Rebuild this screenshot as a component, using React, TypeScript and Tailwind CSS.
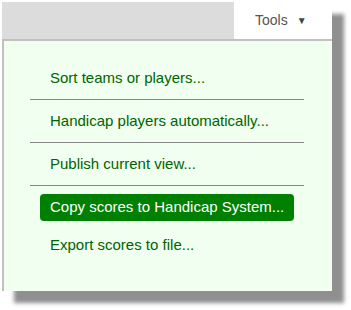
import React from 'react';

const App = () => {
  const items = [
    'Sort teams or players...',
    'Handicap players automatically...',
    'Publish current view...',
    'Copy scores to Handicap System...',
    'Export scores to file...',
  ];
  const active = 3;

  return (
    <div className="w-[351px] h-[310px] bg-white p-[2px]" style={{ fontFamily: '"Liberation Sans", Arial, sans-serif' }}>
      <div className="w-[330px] shadow-[12px_12px_4px_#8f8f8f]">
        {/* Top bar with Tools tab */}
        <div className="flex h-[37px]">
          <div className="flex-1 bg-[#dcdcdc]" />
          <div className="w-[98px] bg-white flex items-center pl-[21px] text-[14px] text-[#555]">
            <span>Tools</span>
            <span className="ml-[9px] text-[10px] text-[#444]">▼</span>
          </div>
        </div>

        {/* Menu panel */}
        <div className="h-[252px] bg-[#f0fff0] border-t-2 border-l-2 border-[#c0c0c0] pt-[16px] pl-[26px]">
          <div className="w-[274px]">
            {items.map((label, i) => (
              <div key={i}>
                <div
                  className={
                    (i === items.length - 1 ? 'mt-[11.5px] ' : 'my-[7.5px] ') +
                    (i === active
                      ? 'mx-[10px] h-[27px] px-[10px] flex items-center whitespace-nowrap rounded-[4px] bg-[#008000] text-white text-[15px]'
                      : 'mx-[10px] h-[27px] px-[10px] flex items-center whitespace-nowrap text-[#006400] text-[15px]')
                  }
                >
                  {label}
                </div>
                {i < 3 && <div className="h-px bg-[#888]" />}
              </div>
            ))}
          </div>
        </div>
      </div>
    </div>
  );
};

export default App;
